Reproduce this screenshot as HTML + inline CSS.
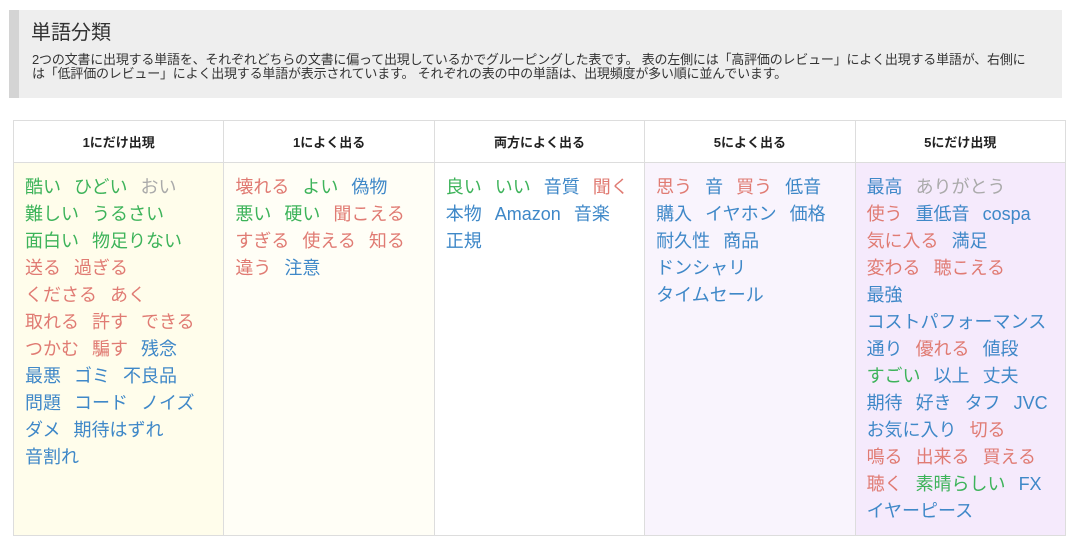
<!DOCTYPE html>
<html><head><meta charset="utf-8"><style>
*{margin:0;padding:0;box-sizing:border-box}
body{width:1075px;height:543px;background:#fff;font-family:"Liberation Sans","Noto Sans CJK JP",sans-serif;overflow:hidden;position:relative}
.hd{position:absolute;left:9px;top:10px;width:1053px;height:88px;background:#eee;border-left:10px solid #d4d4d4}
.hd h1{position:absolute;left:12px;top:10px;font-size:20px;font-weight:normal;color:#333;line-height:26px}
.hd p{position:absolute;left:13px;top:43px;font-size:13px;line-height:14px;color:#333;white-space:nowrap;letter-spacing:-0.2px}
table{position:absolute;left:13px;top:120px;width:1053px;height:415px;border-collapse:collapse;table-layout:fixed}
th{height:42px;font-size:13px;font-weight:bold;color:#222;border:1px solid #ddd;text-align:center;background:#fff}
td{height:373px;vertical-align:top;border:1px solid #ddd;padding:11px 4px 0 11px;font-size:18px;line-height:27px;white-space:nowrap;overflow:hidden}
td span{margin-right:13px}
.g{color:#3db35a}.b{color:#3f88c8}.r{color:#e07b73}.y{color:#aaa}
</style></head><body>
<div class="hd"><h1>単語分類</h1><p>2つの文書に出現する単語を、それぞれどちらの文書に偏って出現しているかでグルーピングした表です。 表の左側には「高評価のレビュー」によく出現する単語が、右側に<br>は「低評価のレビュー」によく出現する単語が表示されています。 それぞれの表の中の単語は、出現頻度が多い順に並んでいます。</p></div>
<table><tr><th>1にだけ出現</th><th>1によく出る</th><th>両方によく出る</th><th>5によく出る</th><th>5にだけ出現</th></tr>
<tr>
<td style="background:#fffdeb"><span class="g">酷い</span><span class="g">ひどい</span><span class="y">おい</span><br><span class="g">難しい</span><span class="g">うるさい</span><br><span class="g">面白い</span><span class="g">物足りない</span><br><span class="r">送る</span><span class="r">過ぎる</span><br><span class="r">くださる</span><span class="r">あく</span><br><span class="r">取れる</span><span class="r">許す</span><span class="r">できる</span><br><span class="r">つかむ</span><span class="r">騙す</span><span class="b">残念</span><br><span class="b">最悪</span><span class="b">ゴミ</span><span class="b">不良品</span><br><span class="b">問題</span><span class="b">コード</span><span class="b">ノイズ</span><br><span class="b">ダメ</span><span class="b">期待はずれ</span><br><span class="b">音割れ</span></td>
<td style="background:#fffef6"><span class="r">壊れる</span><span class="g">よい</span><span class="b">偽物</span><br><span class="g">悪い</span><span class="g">硬い</span><span class="r">聞こえる</span><br><span class="r">すぎる</span><span class="r">使える</span><span class="r">知る</span><br><span class="r">違う</span><span class="b">注意</span></td>
<td style="background:#fff"><span class="g">良い</span><span class="g">いい</span><span class="b">音質</span><span class="r">聞く</span><br><span class="b">本物</span><span class="b">Amazon</span><span class="b">音楽</span><br><span class="b">正規</span></td>
<td style="background:#f9f4fd"><span class="r">思う</span><span class="b">音</span><span class="r">買う</span><span class="b">低音</span><br><span class="b">購入</span><span class="b">イヤホン</span><span class="b">価格</span><br><span class="b">耐久性</span><span class="b">商品</span><br><span class="b">ドンシャリ</span><br><span class="b">タイムセール</span></td>
<td style="background:#f5eafc"><span class="b">最高</span><span class="y">ありがとう</span><br><span class="r">使う</span><span class="b">重低音</span><span class="b">cospa</span><br><span class="r">気に入る</span><span class="b">満足</span><br><span class="r">変わる</span><span class="r">聴こえる</span><br><span class="b">最強</span><br><span class="b">コストパフォーマンス</span><br><span class="b">通り</span><span class="r">優れる</span><span class="b">値段</span><br><span class="g">すごい</span><span class="b">以上</span><span class="b">丈夫</span><br><span class="b">期待</span><span class="b">好き</span><span class="b">タフ</span><span class="b">JVC</span><br><span class="b">お気に入り</span><span class="r">切る</span><br><span class="r">鳴る</span><span class="r">出来る</span><span class="r">買える</span><br><span class="r">聴く</span><span class="g">素晴らしい</span><span class="b">FX</span><br><span class="b">イヤーピース</span></td>
</tr></table>
</body></html>
